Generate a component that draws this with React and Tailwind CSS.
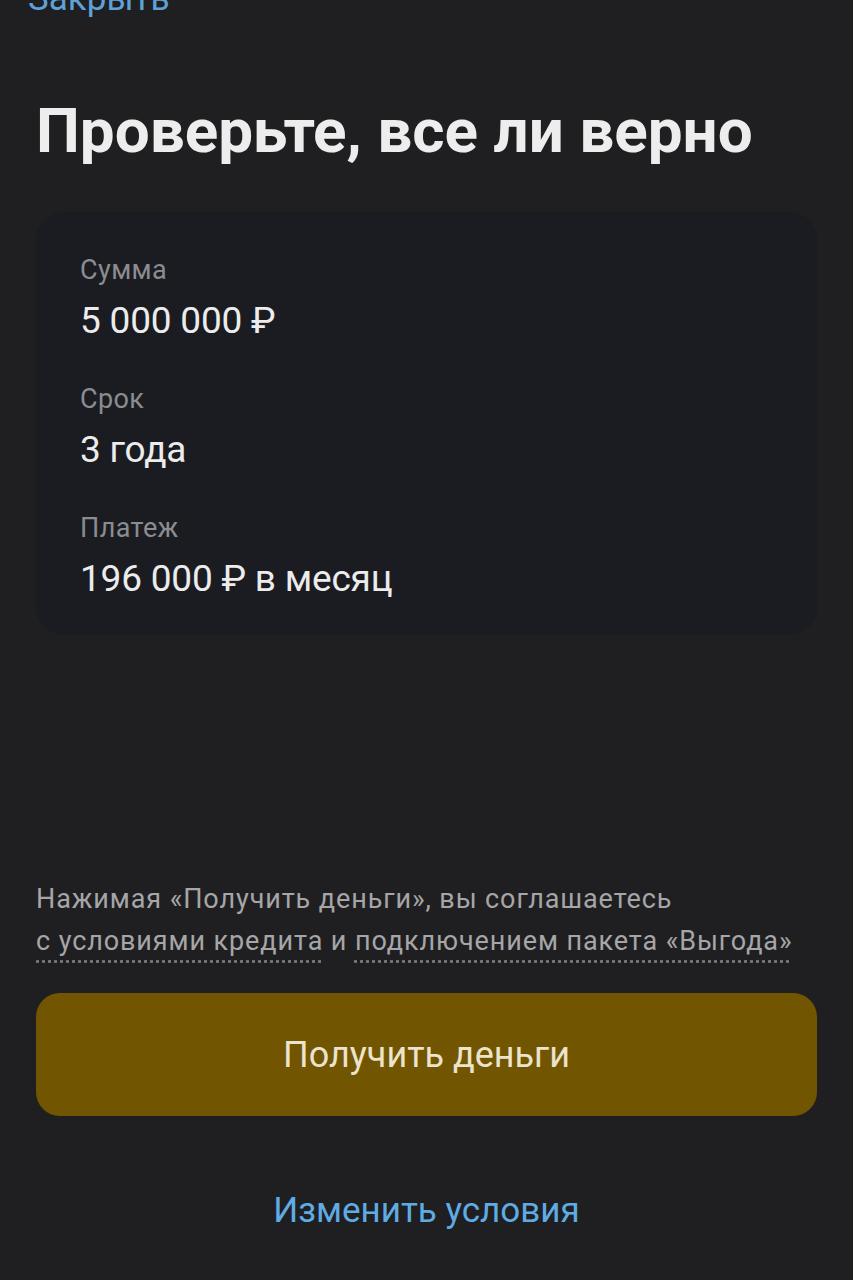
const Row = ({ label, value, className = "" }) => (
  <div className={`flex flex-col ${className}`}>
    <span className="text-[27px] leading-[32px] tracking-[0.4px] text-[#8c8c90]">{label}</span>
    <span className="mt-[13px] text-[37px] leading-[44px] tracking-[-0.2px] text-[#ececec]">{value}</span>
  </div>
);

export default function App() {
  return (
    <div
      className="w-[853px] h-[1280px] overflow-hidden bg-[#1f1f21] flex flex-col px-[36px]"
      style={{ fontFamily: "Roboto, 'Noto Sans', sans-serif" }}
    >
      <div className="-mt-[21px] -ml-[8px] text-[35px] leading-[40px] text-[#5ea2d8]">
        Закрыть
      </div>

      <h1 className="mt-[76px] text-[62px] leading-[72px] font-bold text-[#ededed] tracking-[0px]">
        Проверьте, все ли верно
      </h1>

      <div className="mt-[45px] rounded-[28px] bg-[#1b1c21] pl-[44px] pt-[42px] pb-[34px] flex flex-col gap-[40px]">
        <Row label="Сумма" value="5 000 000 ₽" />
        <Row label="Срок" value="3 года" />
        <Row label="Платеж" value="196 000 ₽ в месяц" />
      </div>

      <p className="mt-[243px] text-[27px] leading-[42px] tracking-[0.9px] text-[#a6a6a8] whitespace-nowrap">
        Нажимая «Получить деньги», вы соглашаетесь
        <br />
        <span className="underline decoration-dotted decoration-[#7a7a7c] underline-offset-[10px]">
          с условиями кредита
        </span>{" "}
        и{" "}
        <span className="underline decoration-dotted decoration-[#7a7a7c] underline-offset-[10px]">
          подключением пакета «Выгода»
        </span>
      </p>

      <button className="mt-[31px] h-[123px] w-full rounded-[24px] bg-[#725500] text-[36px] text-[#ebe3cc]">
        Получить деньги
      </button>

      <div className="mt-[73px] text-center text-[35px] leading-[44px] text-[#5fabe3]">
        Изменить условия
      </div>
    </div>
  );
}
